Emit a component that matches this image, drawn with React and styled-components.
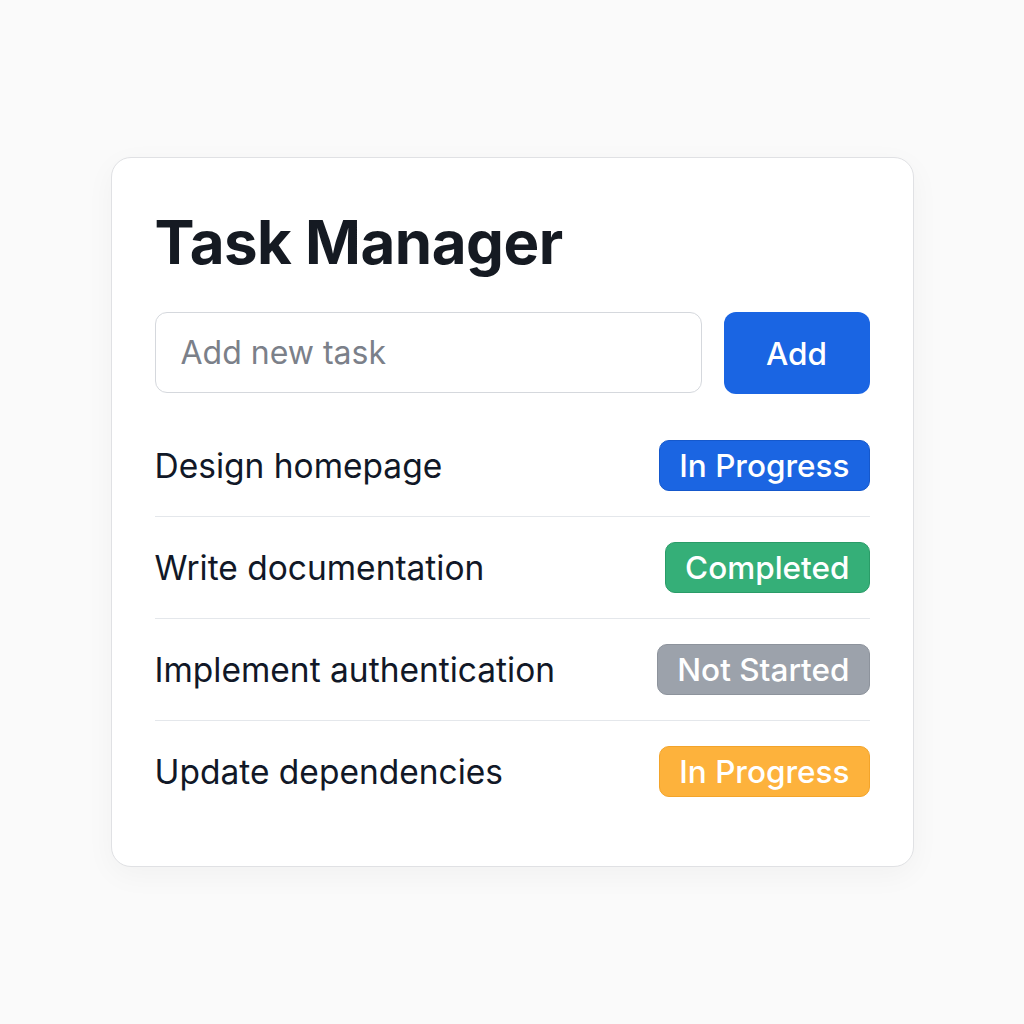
import styled, { createGlobalStyle } from 'styled-components';

const GlobalStyle = createGlobalStyle`
    html, body {
        margin: 0;
        padding: 0;
        background: #fafafa;
        font-family: Inter, "Noto Sans", sans-serif;
    }
`;

const Page = styled.div`
    width: 1024px;
    height: 1024px;
    display: flex;
    justify-content: center;
    padding-top: 157px;
    box-sizing: border-box;
`;

const Card = styled.div`
    width: 803px;
    height: 710px;
    box-sizing: border-box;
    background: #fff;
    border: 1px solid #e0e1e4;
    border-radius: 20px;
    box-shadow: 0 8px 30px rgba(0, 0, 0, 0.04);
    padding: 48px 43px 46px 43px;
    display: flex;
    flex-direction: column;
`;

const Title = styled.h1`
    margin: 0;
    font-size: 60px;
    line-height: 72px;
    font-weight: 700;
    color: #151a22;
    letter-spacing: -0.5px;
`;

const Form = styled.div`
    display: flex;
    gap: 22px;
    margin-top: 34px;
`;

const Input = styled.input`
    flex: 1;
    min-width: 0;
    height: 81px;
    box-sizing: border-box;
    border: 1.5px solid #d5d8dd;
    border-radius: 12px;
    padding: 0 25px;
    font-family: inherit;
    font-size: 32px;
    color: #111827;
    outline: none;

    &::placeholder {
        color: #7b8089;
    }
`;

const AddButton = styled.button`
    flex-shrink: 0;
    width: 146px;
    height: 82px;
    border: none;
    border-radius: 12px;
    background: #1a65e3;
    color: #fff;
    font-family: inherit;
    font-size: 31.5px;
    font-weight: 500;
`;

const List = styled.ul`
    list-style: none;
    margin: 21px 0 0;
    padding: 0;
`;

const Row = styled.li`
    display: flex;
    align-items: center;
    justify-content: space-between;
    padding: 25px 0;
    border-bottom: 1px solid #e4e7eb;

    &:last-child {
        border-bottom: none;
    }
`;

const TaskName = styled.span`
    font-size: 33.5px;
    color: #111827;
`;

const Badge = styled.span`
    height: 51px;
    box-sizing: border-box;
    display: inline-flex;
    align-items: center;
    padding: 0 19px;
    border-radius: 10px;
    font-size: 31.5px;
    font-weight: 500;
    color: #fff;
    background: ${(p) => p.bg};
    border: 1px solid ${(p) => p.edge};
`;

const STATUS = {
    progress: { label: 'In Progress', bg: '#1b65e2', edge: '#1558cc' },
    done: { label: 'Completed', bg: '#35af78', edge: '#2a9c68' },
    todo: { label: 'Not Started', bg: '#9ca2ab', edge: '#8d939c' },
    warn: { label: 'In Progress', bg: '#fdb23c', edge: '#f3a42a' },
};

const tasks = [
    { name: 'Design homepage', status: 'progress' },
    { name: 'Write documentation', status: 'done' },
    { name: 'Implement authentication', status: 'todo' },
    { name: 'Update dependencies', status: 'warn' },
];

const App = () => (
    <>
        <GlobalStyle />
        <Page>
            <Card>
                <Title>Task Manager</Title>
                <Form>
                    <Input placeholder="Add new task" />
                    <AddButton>Add</AddButton>
                </Form>
                <List>
                    {tasks.map((t) => {
                        const s = STATUS[t.status];
                        return (
                            <Row key={t.name}>
                                <TaskName>{t.name}</TaskName>
                                <Badge bg={s.bg} edge={s.edge}>
                                    {s.label}
                                </Badge>
                            </Row>
                        );
                    })}
                </List>
            </Card>
        </Page>
    </>
);

export default App;
